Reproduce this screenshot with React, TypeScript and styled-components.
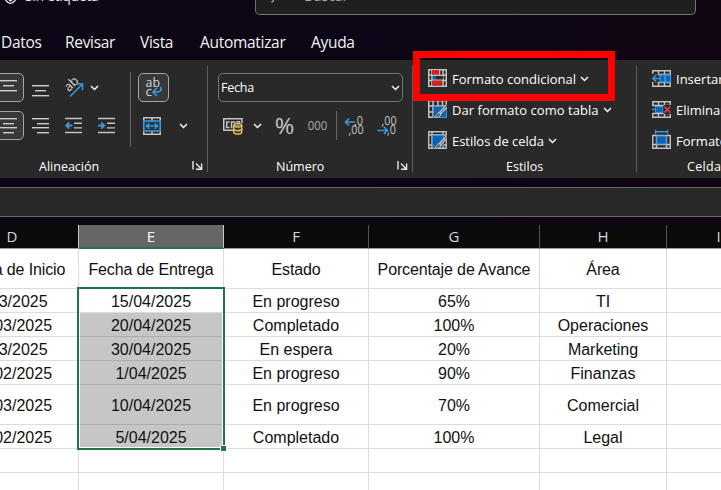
import React from "react";
import styled, { createGlobalStyle } from "styled-components";

const UI = '"Open Sans", "Noto Sans", sans-serif';
const LIGHT = "#c4c4c4";
const BLUE = "#3a96dd";
const FILL = "#0a64b4";

const Global = createGlobalStyle`
  * { box-sizing: border-box; }
  body { margin: 0; background: #0c0615; overflow: hidden; }
  svg { display: block; flex: none; overflow: visible; }
`;

const Window = styled.div`
  position: relative;
  width: 721px;
  height: 490px;
  overflow: hidden;
  display: flex;
  flex-direction: column;
  background: linear-gradient(95deg, #0c0615 0%, #0c0616 45%, #120512 100%);
  font-family: ${UI};
  color: #fff;
`;

const TitleBar = styled.header`
  height: 15px;
  display: flex;
  flex: none;
`;
const Sensitivity = styled.div`
  width: 255px;
  padding-left: 4px;
  display: flex;
  gap: 8px;
`;
const TitleText = styled.span<{ $dim?: boolean; $ls?: number }>`
  font-size: 14px;
  line-height: 20px;
  margin-top: -14px;
  letter-spacing: ${(p) => p.$ls ?? 0}px;
  color: ${(p) => (p.$dim ? "#a8a8a8" : "#e8e8e8")};
`;
const Search = styled.div`
  width: 441px;
  height: 15px;
  padding-left: 14px;
  display: flex;
  gap: 20px;
  background: #1f1f1f;
  border: 1px solid #737373;
  border-top: 0;
  border-radius: 0 0 5px 5px;
`;

const Tabs = styled.nav`
  height: 45px;
  flex: none;
  display: flex;
  padding: 16px 0 0 1px;
`;
const Tab = styled.span<{ $w: number }>`
  width: ${(p) => p.$w}px;
  font-size: 15.5px;
  line-height: 22px;
  letter-spacing: -0.3px;
  white-space: nowrap;
  color: #f2f2f2;
`;

const Ribbon = styled.section`
  height: 118px;
  flex: none;
  display: flex;
  background: #292929;
`;
const Group = styled.div<{ $w: number }>`
  width: ${(p) => p.$w}px;
  flex: none;
  display: flex;
  flex-direction: column;
`;
const GroupDivider = styled.div`
  width: 1px;
  flex: none;
  height: 106px;
  margin-top: 6px;
  background: #5e5e5e;
`;
const GroupBody = styled.div`
  height: 96px;
  flex: none;
  display: flex;
`;
const Caption = styled.div<{ $left: number; $ls?: number }>`
  display: flex;
  padding: 0 4px 0 ${(p) => p.$left}px;
  font-size: 12.5px;
  line-height: 22px;
  letter-spacing: ${(p) => p.$ls ?? 0}px;
  white-space: nowrap;
  svg { margin: 5px 0 0 auto; }
`;
const Rows = styled.div<{ $w: number }>`
  width: ${(p) => p.$w}px;
  flex: none;
  padding-top: 13px;
  display: flex;
  flex-direction: column;
  gap: 9px;
`;
const Row = styled.div`
  height: 29px;
  display: flex;
  align-items: center;
`;
const Slot = styled.div<{ $w: number }>`
  width: ${(p) => p.$w}px;
  height: 29px;
  flex: none;
  display: flex;
  align-items: center;
  justify-content: center;
`;
const Pressed = styled.div`
  width: 31px;
  height: 29px;
  flex: none;
  display: flex;
  align-items: center;
  justify-content: center;
  background: #383838;
  border: 1px solid #a6a6a6;
  border-radius: 5px;
`;
const ToolDivider = styled.div<{ $h: number; $top?: number }>`
  width: 1px;
  flex: none;
  height: ${(p) => p.$h}px;
  margin-top: ${(p) => p.$top ?? 0}px;
  background: #666;
`;
const FormatSelect = styled.div`
  width: 185px;
  height: 29px;
  margin-left: 10px;
  padding: 0 2px;
  display: flex;
  align-items: center;
  justify-content: space-between;
  border: 1px solid #757575;
  border-radius: 5px;
  font-size: 12.5px;
  letter-spacing: -0.2px;
`;
const Commands = styled.div`
  padding: 4px 0 0 15px;
  display: flex;
  flex-direction: column;
`;
const Command = styled.div<{ $ls?: number }>`
  height: 31px;
  display: flex;
  align-items: center;
  gap: 5px;
  font-size: 13px;
  letter-spacing: ${(p) => p.$ls ?? 0}px;
  white-space: nowrap;
  svg:first-child { margin-top: -2px; }
  svg + svg { margin-left: -1px; }
`;

const FormulaBar = styled.div`
  height: 30px;
  flex: none;
  margin: 9px 0 8px;
  background: #292929;
  border: solid #686868;
  border-width: 1px 0;
`;

const COLS = "133px 145px 145px 171px 127px 104px";
const Sheet = styled.main`
  position: relative;
  width: 825px;
  margin-left: -54px;
  flex: none;
  background: #fff;
  color: #111;
  font-family: "Liberation Sans", Arial, sans-serif;
  font-size: 16px;
`;
const Heads = styled.div`
  display: grid;
  grid-template-columns: ${COLS};
  height: 24px;
  font-family: ${UI};
  font-size: 15px;
  line-height: 20px;
  background: #0a0a0a;
`;
const Head = styled.div<{ $active?: boolean }>`
  display: flex;
  align-items: flex-start;
  justify-content: center;
  padding-top: 1px;
  border-right: 1px solid ${(p) => (p.$active ? "#c8c8c8" : "#555")};
  border-bottom: ${(p) => (p.$active ? "2px solid #217346" : "1px solid #9a9a9a")};
  background: ${(p) => (p.$active ? "#666" : "#0a0a0a")};
  color: ${(p) => (p.$active ? "#fff" : "#d6d6d6")};
  &:first-child { border-right-color: #c8c8c8; }
`;
const Line = styled.div<{ $h: number }>`
  display: grid;
  grid-template-columns: ${COLS};
  height: ${(p) => p.$h}px;
`;
const Cell = styled.div<{ $shade?: boolean; $title?: boolean }>`
  display: flex;
  align-items: center;
  justify-content: center;
  padding-top: 2px;
  white-space: nowrap;
  letter-spacing: ${(p) => (p.$title ? -0.13 : 0)}px;
  border: solid ${(p) => (p.$shade ? "#ababab" : "#dcdcdc")};
  border-width: 0 1px 1px 0;
  background: ${(p) => (p.$shade ? "#c6c6c6" : "#fff")};
`;
const Selection = styled.div`
  position: absolute;
  left: 131px;
  top: 62px;
  width: 148px;
  height: 163px;
  border: 2px solid #217346;
  box-shadow: inset 0 0 0 1px #fff;
`;
const Handle = styled.div`
  position: absolute;
  right: -4px;
  bottom: -4px;
  width: 7px;
  height: 7px;
  background: #217346;
  border: 1px solid #fff;
`;
const Highlight = styled.div`
  position: absolute;
  left: 413px;
  top: 51px;
  width: 202px;
  height: 50px;
  border: 7px solid #fe0000;
`;

const Chevron = () => (
  <svg width="9" height="6" viewBox="0 0 9 6" fill="none" stroke="#f4f4f4" strokeWidth="1.5">
    <path d="M1 1L4.5 4.5L8 1" />
  </svg>
);

const Bars = ({ rows, h = 17 }: { rows: [number, number, number][]; h?: number }) => (
  <svg width="17" height={h} viewBox={`0 0 17 ${h}`} fill="#cfcfcf">
    {rows.map(([x, y, w]) => (
      <rect key={y} x={x} y={y} width={w} height="1.4" />
    ))}
  </svg>
);

const Indent = ({ inward }: { inward?: boolean }) => (
  <svg width="17" height="17" viewBox="0 0 17 17" fill="none">
    <path d="M0 1.5H17M9 6.3H17M9 10.9H17M0 15.5H17" stroke={LIGHT} strokeWidth="1.4" />
    <path
      d={inward ? "M0 8.5H6M3.3 5.5L6.3 8.5L3.3 11.5" : "M7.5 8.5H1.5M4.2 5.5L1.2 8.5L4.2 11.5"}
      stroke={BLUE}
      strokeWidth="1.8"
    />
  </svg>
);

const Orientation = () => (
  <svg width="20" height="20" viewBox="0 0 20 20">
    <text x="0" y="0" transform="translate(5 14.3) rotate(-45)" fontFamily={UI} fontSize="13" fill="#d4d4d4">
      ab
    </text>
    <path d="M6 18.5L18 6.5M12.5 6H18.5V12" fill="none" stroke={BLUE} strokeWidth="1.6" />
  </svg>
);

const WrapText = () => (
  <svg width="19" height="21" viewBox="0 0 19 21">
    <g fontFamily={UI} fontSize="13.5" fill="#d4d4d4">
      <text x="1.5" y="10.2" textLength="14.5" lengthAdjust="spacingAndGlyphs">ab</text>
      <text x="1.5" y="18.8">c</text>
    </g>
    <path d="M17 10V11.5Q17 15 13.5 15H9.5M12.8 11.2L9 15L12.8 18.8" fill="none" stroke={BLUE} strokeWidth="1.7" />
  </svg>
);

const Merge = () => (
  <svg width="18" height="18" viewBox="0 0 18 18" fill="none">
    <path d="M.75 .75H17.25V17.25H.75ZM9 0V4M9 14V18" stroke={LIGHT} strokeWidth="1.5" />
    <rect x=".75" y="4" width="16.5" height="10" fill="#2d3740" stroke={BLUE} strokeWidth="1.6" />
    <path d="M3.5 9H14.5M6.2 6.2L3.4 9L6.2 11.8M11.8 6.2L14.6 9L11.8 11.8" stroke={BLUE} strokeWidth="1.4" />
  </svg>
);

const Accounting = () => (
  <svg width="20" height="18" viewBox="0 0 20 18" fill="none">
    <path d="M10 13.3H.75V1.75H19V6" stroke={LIGHT} strokeWidth="1.5" />
    <path d="M6.5 5H3.7V10.5H6.5M12 5H8.5V10.5H9.5M11.8 6.5V5M14 5.5V4.8H16.5V6" stroke={LIGHT} strokeWidth="1.5" />
    <path d="M10.7 8.5V15C10.7 17.8 18.8 17.8 18.8 15V8.5Z" fill="#4b3c1d" stroke="#f2c766" strokeWidth="1.3" />
    <ellipse cx="14.75" cy="8.3" rx="4.05" ry="1.8" fill="#8b7c5c" stroke="#f2c766" strokeWidth="1.2" />
    <path d="M10.7 11.7C10.7 14.2 18.8 14.2 18.8 11.7" stroke="#f2c766" strokeWidth="1.3" />
  </svg>
);

const Percent = () => (
  <svg width="18" height="18" viewBox="0 0 18 18">
    <text x="-1.3" y="17" fontFamily={UI} fontSize="22" fill={LIGHT} textLength="19.6" lengthAdjust="spacingAndGlyphs">
      %
    </text>
  </svg>
);

const Thousands = () => (
  <svg width="19" height="10" viewBox="0 0 19 10">
    <text x="-.3" y="9.3" fontFamily={UI} fontSize="12.5" fill="#aaa" textLength="19.6" lengthAdjust="spacingAndGlyphs">
      000
    </text>
  </svg>
);

const Decimals = ({ less }: { less?: boolean }) => (
  <svg width="19" height="20" viewBox="0 0 19 20">
    <g fontFamily={UI} fontSize="12.5" fill={LIGHT}>
      <text x={less ? 4.5 : 10} y="8.8" textLength={less ? 15 : 9} lengthAdjust="spacingAndGlyphs">{less ? ",00" : ",0"}</text>
      <text x={less ? 10 : 4.5} y="18.2" textLength={less ? 9 : 15} lengthAdjust="spacingAndGlyphs">{less ? ",0" : ",00"}</text>
    </g>
    <path
      d={less ? "M.5 14.5H10M7 11L10.5 14.5L7 18" : "M11 6H2M5 2.5L1.5 6L5 9.5"}
      fill="none"
      stroke={BLUE}
      strokeWidth="1.7"
    />
  </svg>
);

const Launcher = () => (
  <svg width="11" height="10" viewBox="0 0 11 10" fill="none" stroke="#e8e8e8" strokeWidth="1.4">
    <path d="M1 0V8.5M4 2.5L9.3 8M9.6 2.5V8.3H4" />
  </svg>
);

const Lattice = () => (
  <path d="M.75 .75H18.25V17.25H.75ZM0 6H19M0 12H19M5 0V18M10 0V6M14.5 0V18" stroke={LIGHT} strokeWidth="1.5" fill="none" />
);
const Conditional = () => (
  <svg width="19" height="18" viewBox="0 0 19 18">
    <path
      d="M.75 .75H18.25V17.25H.75ZM0 6H4M14 6H19M0 11.5H4M14 11.5H19M4 0V18M15 0V18"
      stroke={LIGHT}
      strokeWidth="1.5"
      fill="none"
    />
    <rect x="4" y="1" width="7.3" height="5" fill="#d92020" />
    <rect x="4.7" y="6.5" width="3.3" height="4.5" fill={FILL} />
    <rect x="8" y="6.5" width="7" height="4.5" fill="#292929" />
    <path d="M4 6.3H15M4 11.2H15M11.7 1V6" stroke={LIGHT} strokeWidth="1.2" />
    <rect x="4" y="11.7" width="9.5" height="4.8" fill="#d92020" />
  </svg>
);
const Brush = () => (
  <g>
    <path d="M18.5 4L10.5 12.5L8 13.2L5 17.5H10L13 15L19 8Z" fill="#292929" />
    <path d="M18.3 5L11.5 12.3L13 13.7L18.8 7.5" fill="#5c6368" stroke={LIGHT} strokeWidth="1.2" />
    <path d="M11 12.6C8 12.8 9 15.8 6 17.2Q12.5 18.3 13 14.2Z" fill="#3e6f98" stroke={LIGHT} strokeWidth="1" />
  </g>
);
const TableFormat = () => (
  <svg width="19" height="18" viewBox="0 0 19 18">
    <Lattice />
    <rect x="5.5" y="6.5" width="13" height="11" fill={FILL} stroke={BLUE} />
    <Brush />
  </svg>
);
const CellStyle = () => (
  <svg width="19" height="18" viewBox="0 0 19 18">
    <path d="M.75 .75H18.25V17.25H.75ZM0 4H19M4 0V18M15 0V18M0 14H19" stroke={LIGHT} strokeWidth="1.3" fill="none" />
    <rect x="4.5" y="4.5" width="11" height="10" fill={FILL} stroke={BLUE} />
    <Brush />
  </svg>
);
const InsertCells = () => (
  <svg width="19" height="17" viewBox="0 0 19 17" fill="none">
    <path d="M.75 4V.75H18.25V4M.75 12V16.25H18.25V12M6.5 0V5M12.5 0V5M6.5 12V17M12.5 12V17M6 4.5H19M6 12.5H19" stroke={LIGHT} strokeWidth="1.4" />
    <rect x="8" y="5" width="10.5" height="7" fill={FILL} stroke={BLUE} strokeWidth="1.3" />
    <path d="M13 5V12M8 8.5H1M4.5 4.7L.8 8.5L4.5 12.3" stroke={BLUE} strokeWidth="1.6" />
  </svg>
);
const DeleteCells = () => (
  <svg width="19" height="17" viewBox="0 0 19 17" fill="none">
    <path d="M.75 0V4.5H18.25V0M.75 17V12.5H18.25V17M6.5 0V4M12.5 0V4M6.5 13V17M12.5 13V17M0 .75H19M0 16.25H19" stroke={LIGHT} strokeWidth="1.4" />
    <path d="M0 8.5H5" stroke={BLUE} strokeWidth="1.5" />
    <rect x="3.5" y="5.5" width="7.5" height="6" fill={FILL} stroke={BLUE} />
    <path d="M11.5 4H19V13H11.5Z" fill="#292929" />
    <path d="M12.3 5.5L18.3 11.7M18.3 5.5L12.3 11.7" stroke="#d84444" strokeWidth="1.7" />
  </svg>
);
const FormatCells = () => (
  <svg width="19" height="19" viewBox="0 0 19 19" fill="none">
    <path d="M.75 5V18.25H18.25V5M0 5.5H19M0 14.5H19M4.5 5V19M14.5 5V19" stroke={LIGHT} strokeWidth="1.4" />
    <rect x="4.8" y="6" width="9.4" height="8" fill={FILL} stroke={BLUE} />
    <path d="M3 1.8H16M3.5 -.2V4M15.5 -.2V4" stroke={BLUE} strokeWidth="1.4" />
  </svg>
);

const columns = ["D", "E", "F", "G", "H", "I"];
const lines: { h: number; cells: string[] }[] = [
  { h: 40, cells: ["Fecha de Inicio", "Fecha de Entrega", "Estado", "Porcentaje de Avance", "Área", ""] },
  { h: 24, cells: ["1/03/2025", "15/04/2025", "En progreso", "65%", "TI", ""] },
  { h: 24, cells: ["10/03/2025", "20/04/2025", "Completado", "100%", "Operaciones", ""] },
  { h: 24, cells: ["5/03/2025", "30/04/2025", "En espera", "20%", "Marketing", ""] },
  { h: 24, cells: ["15/02/2025", "1/04/2025", "En progreso", "90%", "Finanzas", ""] },
  { h: 40, cells: ["10/03/2025", "10/04/2025", "En progreso", "70%", "Comercial", ""] },
  { h: 24, cells: ["20/02/2025", "5/04/2025", "Completado", "100%", "Legal", ""] },
  { h: 24, cells: ["", "", "", "", "", ""] },
  { h: 24, cells: ["", "", "", "", "", ""] },
];

export default function App() {
  return (
    <>
      <Global />
      <Window>
        <TitleBar>
          <Sensitivity>
            <svg width="13" height="5" viewBox="0 0 13 5" fill="none" stroke="#e8e8e8" strokeWidth="1.3">
              <path d="M1.5 0Q3.5 2.6 6.5 3.5Q9.5 2.6 11.5 0M5 0L6.5 1L8 0" />
            </svg>
            <TitleText $ls={-0.35}>Sin etiqueta</TitleText>
          </Sensitivity>
          <Search>
            <svg width="14" height="4" viewBox="0 0 14 4" stroke="#a8a8a8" strokeWidth="1.3">
              <path d="M1.5 2.5L4 0" />
            </svg>
            <TitleText $dim>Buscar</TitleText>
          </Search>
        </TitleBar>
        <Tabs>
          <Tab $w={64}>Datos</Tab>
          <Tab $w={75}>Revisar</Tab>
          <Tab $w={60}>Vista</Tab>
          <Tab $w={111}>Automatizar</Tab>
          <Tab $w={60}>Ayuda</Tab>
        </Tabs>

        <Ribbon>
          <Group $w={207}>
            <GroupBody>
              <Rows $w={130}>
                <Row>
                  <Slot $w={17}>
                    <Pressed><Bars rows={[[0, 1, 17], [3, 6, 11], [0, 11, 17]]} /></Pressed>
                  </Slot>
                  <Slot $w={47}><Bars rows={[[0, 8, 17], [3, 13, 11], [0, 18, 17]]} h={22} /></Slot>
                  <Slot $w={20}><Orientation /></Slot>
                  <Slot $w={21}><Chevron /></Slot>
                </Row>
                <Row>
                  <Slot $w={17}>
                    <Pressed><Bars rows={[[0, 1, 17], [3, 6, 11], [0, 10, 17], [3, 15, 11]]} /></Pressed>
                  </Slot>
                  <Slot $w={47}><Bars rows={[[0, 1, 17], [5, 6, 12], [0, 10, 17], [5, 15, 12]]} /></Slot>
                  <Slot $w={19}><Indent /></Slot>
                  <Slot $w={47}><Indent inward /></Slot>
                </Row>
              </Rows>
              <ToolDivider $h={75} $top={12} />
              <Rows $w={76}>
                <Row>
                  <Slot $w={45}><Pressed><WrapText /></Pressed></Slot>
                </Row>
                <Row>
                  <Slot $w={42}><Merge /></Slot>
                  <Slot $w={20}><Chevron /></Slot>
                </Row>
              </Rows>
            </GroupBody>
            <Caption $left={39}>Alineación<Launcher /></Caption>
          </Group>
          <GroupDivider />
          <Group $w={204}>
            <GroupBody>
              <Rows $w={204}>
                <FormatSelect>Fecha<Chevron /></FormatSelect>
                <Row>
                  <Slot $w={49}><Accounting /></Slot>
                  <Slot $w={1}><Chevron /></Slot>
                  <Slot $w={53}><Percent /></Slot>
                  <Slot $w={13}><Thousands /></Slot>
                  <Slot $w={12} />
                  <ToolDivider $h={29} />
                  <Slot $w={33}><Decimals /></Slot>
                  <Slot $w={33}><Decimals less /></Slot>
                </Row>
              </Rows>
            </GroupBody>
            <Caption $left={68}>Número<Launcher /></Caption>
          </Group>
          <GroupDivider />
          <Group $w={223}>
            <GroupBody>
              <Commands>
                <Command><Conditional />Formato condicional<Chevron /></Command>
                <Command $ls={0.05}><TableFormat />Dar formato como tabla<Chevron /></Command>
                <Command $ls={-0.05}><CellStyle />Estilos de celda<Chevron /></Command>
              </Commands>
            </GroupBody>
            <Caption $left={93}>Estilos</Caption>
          </Group>
          <GroupDivider />
          <Group $w={84}>
            <GroupBody>
              <Commands>
                <Command><InsertCells />Insertar</Command>
                <Command><DeleteCells />Eliminar</Command>
                <Command><FormatCells />Formato</Command>
              </Commands>
            </GroupBody>
            <Caption $left={50} $ls={0.35}>Celdas</Caption>
          </Group>
        </Ribbon>

        <FormulaBar />

        <Sheet>
          <Heads>
            {columns.map((c) => (
              <Head key={c} $active={c === "E"}>{c}</Head>
            ))}
          </Heads>
          {lines.map((line, r) => (
            <Line key={r} $h={line.h}>
              {line.cells.map((text, c) => (
                <Cell key={c} $title={r === 0} $shade={c === 1 && r >= 2 && r <= 6}>{text}</Cell>
              ))}
            </Line>
          ))}
          <Selection><Handle /></Selection>
        </Sheet>
        <Highlight />
      </Window>
    </>
  );
}
